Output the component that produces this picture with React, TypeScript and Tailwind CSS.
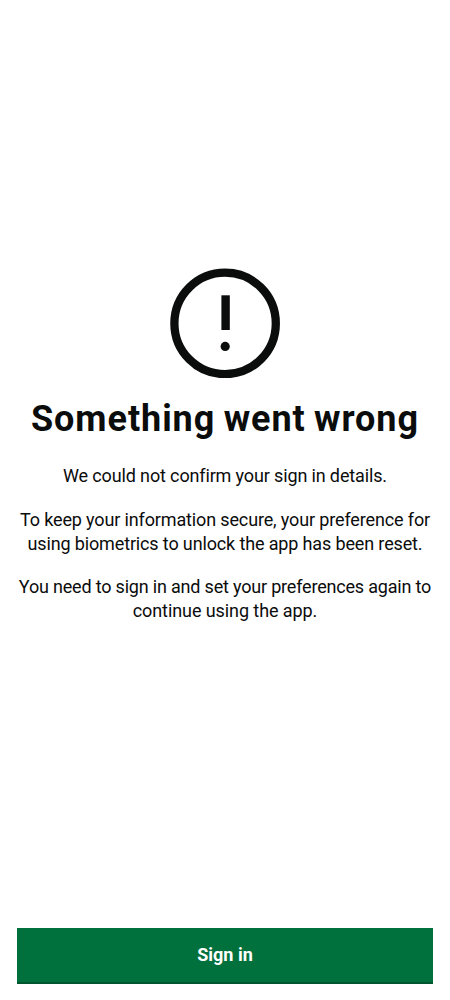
import React from "react";

function ErrorIcon() {
  return (
    <svg className="h-[110px] w-[110px]" viewBox="0 0 110 110" fill="none" aria-hidden="true">
      <circle cx="55.1" cy="55.4" r="50.7" stroke="#0b0c0c" strokeWidth="8.3" />
      <rect x="51.4" y="27.3" width="8.4" height="34.7" fill="#0b0c0c" />
      <circle cx="55.2" cy="78.4" r="4.6" fill="#0b0c0c" />
    </svg>
  );
}

export default function App() {
  return (
    <main className="flex h-[1000px] w-[450px] flex-col items-center bg-white pt-[268px] font-['Roboto',sans-serif] text-[#0b0c0c]">
      <ErrorIcon />
      <h1 className="mt-[17px] text-[36px] leading-[48px] font-bold tracking-[0.95px] [word-spacing:-1.5px] whitespace-nowrap">
        Something went wrong
      </h1>
      <div className="mt-[21px] flex flex-col gap-[19.5px] text-center text-[18px] leading-6 tracking-[-0.14px] whitespace-nowrap">
        <p>We could not confirm your sign in details.</p>
        <p>
          To keep your information secure, your preference for
          <br />
          using biometrics to unlock the app has been reset.
        </p>
        <p>
          <span className="tracking-[-0.19px]">You need to sign in and set your preferences again to</span>
          <br />
          <span className="tracking-[-0.08px]">continue using the app.</span>
        </p>
      </div>
      <button className="mt-auto mb-4 flex h-14 w-[415.5px] items-center justify-center border-b-2 border-[#00562e] bg-[#00703c] pb-[2px] text-[18px] font-bold text-white">
        Sign in
      </button>
    </main>
  );
}
